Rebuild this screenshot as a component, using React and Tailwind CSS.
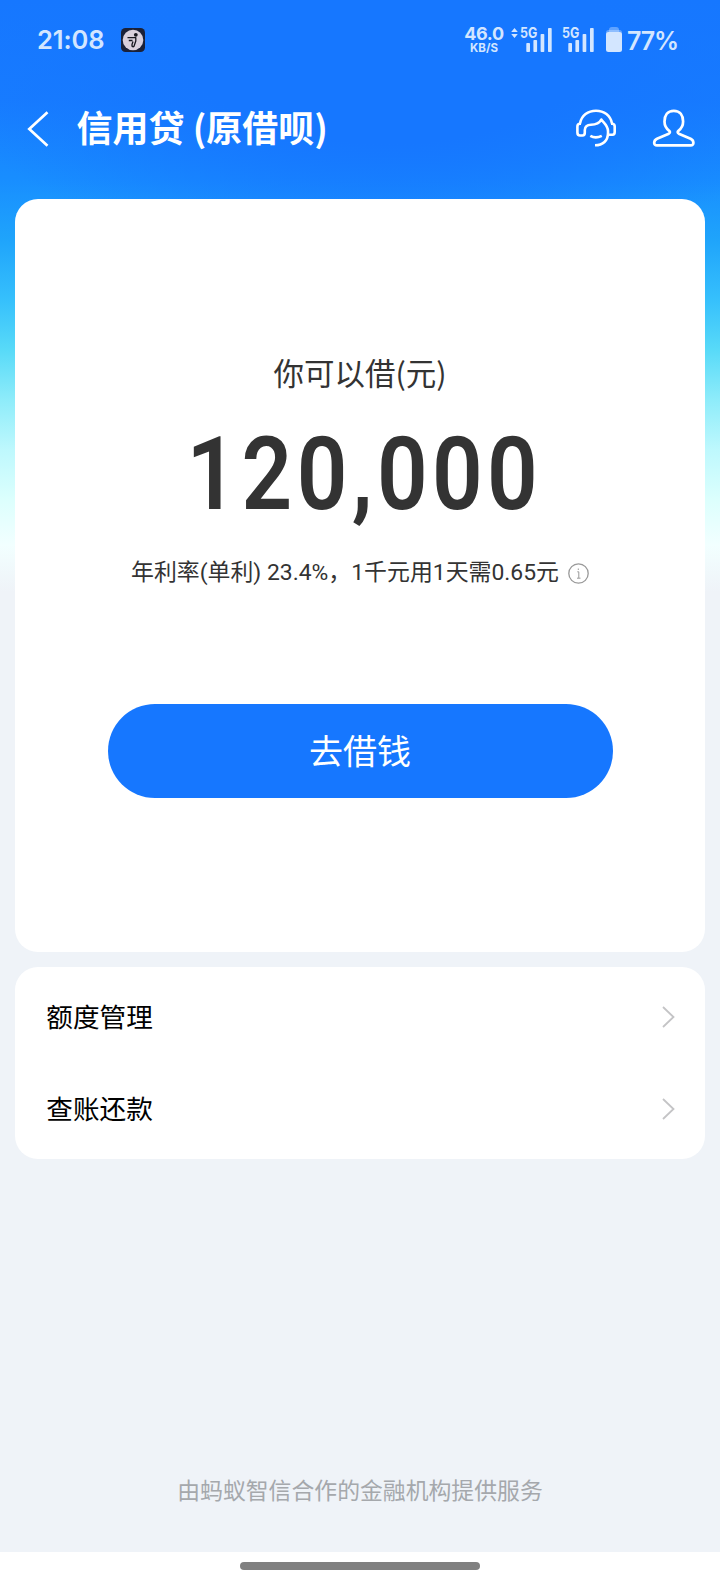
import React from "react";

const FONT = "font-['Roboto','Noto_Sans_CJK_SC',sans-serif]";

function Signal() {
  return (
    <svg className="mt-[28px] h-6 w-[32px]" viewBox="0 0 32 24" fill="currentColor">
      <rect x="6.3" y="15" width="3.7" height="9" rx="0.8" />
      <rect x="13.4" y="12" width="3.7" height="12" rx="0.8" />
      <rect x="20.6" y="6" width="3.7" height="18" rx="0.8" />
      <rect x="28" y="0" width="3.7" height="24" rx="0.8" />
    </svg>
  );
}

function Network({ label }) {
  return (
    <div className="relative flex">
      <Signal />
      <span className="absolute left-0 top-[26px] origin-left scale-x-[0.86] text-[14.500px] leading-[14px] font-bold">
        {label}
      </span>
    </div>
  );
}

function StatusBar() {
  return (
    <div className="flex h-20 items-start pl-[37px] text-[#d3e6ff] font-['Inter',sans-serif]">
      <span className="mt-[25px] w-[84px] text-[25.500px] leading-[30px] font-semibold tracking-[-0.100px]">21:08</span>
      <svg className="mt-7 h-6 w-6" viewBox="0 0 24 24">
        <rect width="24" height="24" rx="4.5" fill="#1b2138" />
        <circle cx="12" cy="12" r="10.300" fill="#d9d0dc" />
        <circle cx="14.800" cy="6.800" r="1.900" fill="#16161e" />
        <path d="M6.500 9.700H14.800V13L13 18.300Q12 19.300 11 18V16.500L12 13.500M7.800 12.500H11.500" fill="none" stroke="#16161e" strokeWidth="1.300" strokeLinejoin="round" />
      </svg>
      <div className="ml-[318px] mt-[24px] flex w-[42px] flex-col items-center">
        <span className="h-[18px] text-[18px] leading-[20px] font-bold tracking-[-0.300px]">46.0</span>
        <span className="text-[11.500px] leading-[12px] font-bold">KB/S</span>
      </div>
      <svg className="ml-[6px] mt-[28px] h-[10px] w-[7px]" viewBox="0 0 7 10" fill="currentColor">
        <path d="M3.500 0L6.800 4H0.200ZM3.500 10L0.200 6H6.800Z" />
      </svg>
      <div className="ml-[2px] flex gap-[10px]">
        <Network label="5G" />
        <Network label="5G" />
      </div>
      <svg className="ml-[12px] mt-[27px] h-[25px] w-4" viewBox="0 0 16 25" fill="currentColor">
        <path d="M3 5V3Q3 0 6 0H10Q13 0 13 3V5Z" opacity="0.4" />
        <rect y="3" width="16" height="8" rx="2.5" opacity="0.4" />
        <rect y="5" width="16" height="20" rx="2.5" />
      </svg>
      <span className="ml-[5px] mt-[25.500px] text-[25px] leading-[30px] font-semibold tracking-[-1.200px]">77%</span>
    </div>
  );
}

function NavBar() {
  return (
    <header className="flex h-[119px] items-start text-white">
      <svg className="ml-[27px] mt-[30.500px] h-9 w-[22px]" viewBox="0 0 22 36" fill="none" stroke="currentColor" strokeWidth="2.7">
        <path d="M20.5 1.2L2.3 18L20.5 34.8" />
      </svg>
      <h1 className="ml-[27.500px] mt-[22px] w-[498.500px] text-[36px] leading-[48px] font-bold whitespace-pre font-['Noto_Sans_CJK_SC',sans-serif]">
        信用贷 (原借呗)
      </h1>
      <svg className="mt-7 h-10 w-[42px]" viewBox="0 0 42 40" fill="none" stroke="currentColor" strokeWidth="2.6" strokeLinejoin="round">
        <path d="M5 15.500C6.500 7.500 13 2.700 21 2.700S35.500 7.500 37 15.500" />
        <path d="M6 15.700H4.500Q2.400 16 2.400 18.500V24.500Q2.400 27.500 5 27.500H7.500Q9.800 27.500 9.800 24.500V22C10 18.300 12.500 16.700 16 16.700C21 16.700 24.500 15 26.300 11.500C28.500 14.500 33 17.500 33 23V25C33 32.500 28 37.300 20 37.300" />
        <path d="M36 15.700H37.500Q39.700 16 39.700 18.500V24Q39.700 26.700 37.500 26.700H33" />
        <path d="M15.300 27.800Q20.500 31 26.800 27.800" />
      </svg>
      <svg className="ml-[35px] mt-7 h-10 w-11" viewBox="0 0 44 40" fill="none" stroke="currentColor" strokeWidth="2.7" strokeLinejoin="round">
        <path d="M21.800 2.900C15.500 2.900 12.500 7.500 12.500 13.500C12.500 17.500 14.500 20.800 17.200 22.800C18.400 23.800 18 25 16.800 25.700L5 30.800C1.500 32.500 1 37.400 5 37.400H38.600C42.600 37.400 42.100 32.500 38.600 30.800L26.800 25.700C25.600 25 25.200 23.800 26.400 22.800C29.100 20.800 31.100 17.500 31.100 13.500C31.100 7.500 28.100 2.900 21.800 2.900Z" />
      </svg>
    </header>
  );
}

function Row({ children }) {
  return (
    <div className="flex h-[92px] items-center justify-between pl-[31px] pr-[30px]">
      <span className="mt-[2px] text-[26.600px] leading-[40px] text-black">{children}</span>
      <svg className="mt-[1px] h-[22px] w-[13px]" viewBox="0 0 13 22" fill="none" stroke="#c4c4c6" strokeWidth="1.8">
        <path d="M1 1L11.500 11L1 21" />
      </svg>
    </div>
  );
}

export default function App() {
  return (
    <div className={`flex h-[1584px] w-[720px] flex-col overflow-hidden bg-[#eff3f8] ${FONT}`}>
      <div className="flex h-[1552px] flex-col bg-[radial-gradient(ellipse_460px_230px_at_54%_40px,#1677ff_0%,#1677ff_45%,#1677ff00_100%),linear-gradient(180deg,#1677ff_0px,#177cff_100px,#188eff_180px,#1fa4fb_240px,#36c0fc_300px,#58daf8_350px,#8eecfa_400px,#bef8fd_450px,#dcfffd_500px,#f2ffff_545px,#eff3f8_592px)]">
        <StatusBar />
        <NavBar />
        <main className="mx-[15.360px] flex flex-col gap-[15px]">
          <section className="flex h-[752.500px] flex-col items-center rounded-[23px] bg-white text-[#333333]">
            <p className="mt-[150px] text-[30.500px] leading-[46px] font-['Noto_Sans_CJK_SC',sans-serif]">你可以借(元)</p>
            <div className="mt-[19px] flex h-[120px] items-center justify-center pl-[9px]">
              <span className="scale-x-[0.870] text-[102px] leading-[120px] font-semibold tracking-[5px]">120,000</span>
            </div>
            <div className="mt-[20px] flex h-[38px] items-center gap-[9px]">
              <span className="text-[22.900px] leading-[36px] whitespace-pre">年利率(单利) 23.4%，1千元用1天需0.65元</span>
              <svg className="h-[21px] w-[21px]" viewBox="0 0 21 21" fill="none" stroke="#999999" strokeWidth="1.300">
                <circle cx="10.500" cy="10.500" r="9.700" />
                <path d="M9.300 8.800H10.800V15M9 15.200H12.500M10.300 5.500V7" strokeWidth="1" />
              </svg>
            </div>
            <button className="mt-[112px] h-[94px] w-[505px] shrink-0 rounded-full bg-[#1677ff] pb-[2px] text-[34px] leading-[50px] text-white font-['Noto_Sans_CJK_SC',sans-serif]">
              去借钱
            </button>
          </section>
          <section className="flex h-[192.500px] flex-col rounded-[23px] bg-white pt-[4px]">
            <Row>额度管理</Row>
            <Row>查账还款</Row>
          </section>
        </main>
        <footer className="mt-auto pb-[42px] text-center text-[22.850px] leading-[36px] text-[#a5a8ac]">
          由蚂蚁智信合作的金融机构提供服务
        </footer>
      </div>
      <div className="flex h-8 justify-center bg-white pt-[10px]">
        <div className="h-2 w-60 rounded-full bg-[#808080]" />
      </div>
    </div>
  );
}
